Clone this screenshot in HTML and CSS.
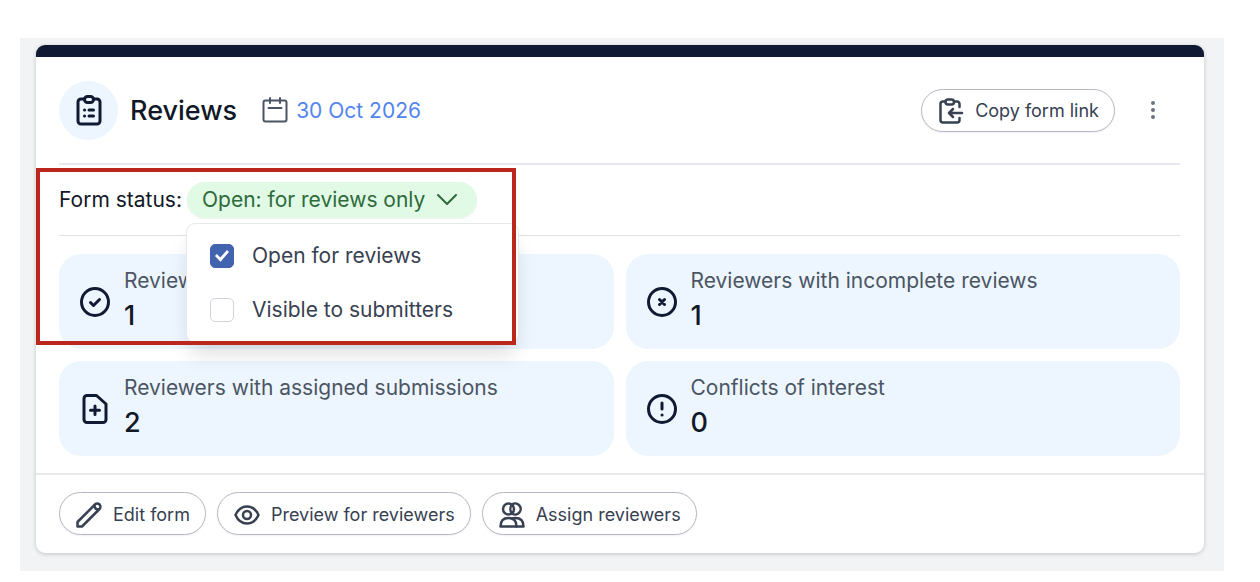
FILE: index.html
```html
<!DOCTYPE html>
<html lang="en">
<head>
    <meta charset="UTF-8">
    <meta name="viewport" content="width=device-width, initial-scale=1.0">
    <title>Reviews</title>
    <link rel="stylesheet" href="styles.css">
</head>
<body>
    <main class="page">
        <section class="card">
            <div class="card-body">
                <header class="card-header">
                    <span class="badge">
                        <svg class="icon-large" viewBox="0 0 32 32">
                            <path d="M11.500 5H8a3 3 0 0 0-3 3v19a3 3 0 0 0 3 3h16a3 3 0 0 0 3-3V8a3 3 0 0 0-3-3h-3.500"/>
                            <rect x="11.500" y="2.500" width="9" height="6" rx="3"/>
                            <path d="M11.500 16h.1M16 16h4.500M11.500 22h.1M16 22h4.500"/>
                        </svg>
                    </span>
                    <h1>Reviews</h1>
                    <svg class="icon calendar" viewBox="0 0 26 26">
                        <rect x="1.500" y="3.500" width="23" height="21" rx="2"/>
                        <path d="M8 1v5M18 1v5M6.500 11h13"/>
                    </svg>
                    <a class="date" href="#">30 Oct 2026</a>
                    <div class="header-actions">
                        <button class="btn" type="button">
                            <svg class="icon" viewBox="0 0 26 26">
                                <path d="M7 3.500H5a2.500 2.500 0 0 0-2.500 2.500v16a2.500 2.500 0 0 0 2.500 2.500h14a2.500 2.500 0 0 0 2.500-2.500v-2M16 3.500h3a2.500 2.500 0 0 1 2.500 2.500v3"/>
                                <rect x="7.500" y="1.500" width="8.500" height="5" rx="2.500"/>
                                <path d="M24 15H11M15 11l-4 4 4 4"/>
                            </svg>
                            Copy form link
                        </button>
                        <button class="more" type="button" aria-label="More actions">
                            <svg viewBox="0 0 6 20">
                                <circle cx="3" cy="3" r="2"/>
                                <circle cx="3" cy="10" r="2"/>
                                <circle cx="3" cy="17" r="2"/>
                            </svg>
                        </button>
                    </div>
                </header>

                <div class="status">
                    <span>Form status:</span>
                    <div class="dropdown">
                        <button class="status-btn" type="button" aria-expanded="true">
                            Open: for reviews only
                            <svg class="chevron" viewBox="0 0 20 12"><path d="m1 1 9 9 9-9"/></svg>
                        </button>
                        <div class="menu">
                            <label><input type="checkbox" checked>Open for reviews</label>
                            <label><input type="checkbox">Visible to submitters</label>
                        </div>
                    </div>
                    <div class="highlight"></div>
                </div>

                <div class="stats">
                    <div class="stat">
                        <svg class="icon-large" viewBox="0 0 32 32">
                            <circle cx="16" cy="16" r="13.500"/>
                            <path d="m11.500 16.500 3 3 6-6"/>
                        </svg>
                        <div>
                            <p>Reviewers</p>
                            <strong>1</strong>
                        </div>
                    </div>
                    <div class="stat">
                        <svg class="icon-large" viewBox="0 0 32 32">
                            <circle cx="16" cy="16" r="13.500"/>
                            <path d="m13.500 13.500 5 5M18.500 13.500l-5 5"/>
                        </svg>
                        <div>
                            <p>Reviewers with incomplete reviews</p>
                            <strong>1</strong>
                        </div>
                    </div>
                    <div class="stat">
                        <svg class="icon-large" viewBox="0 0 32 32">
                            <path d="M8 2.500h9.500L27 11v15.500a3 3 0 0 1-3 3H8a3 3 0 0 1-3-3v-21a3 3 0 0 1 3-3Z"/>
                            <path d="M16 13v8.500M11.500 17.250h9"/>
                        </svg>
                        <div>
                            <p>Reviewers with assigned submissions</p>
                            <strong>2</strong>
                        </div>
                    </div>
                    <div class="stat">
                        <svg class="icon-large" viewBox="0 0 32 32">
                            <circle cx="16" cy="16" r="13.500"/>
                            <path d="M16 10v6M16 22h.1"/>
                        </svg>
                        <div>
                            <p>Conflicts of interest</p>
                            <strong>0</strong>
                        </div>
                    </div>
                </div>
            </div>

            <footer class="card-footer">
                <button class="btn" type="button">
                    <svg class="icon" viewBox="0 0 26 26">
                        <path d="M1.500 24.500v-4.500L19 2.500a3 3 0 0 1 4.500 4.500L6 24.500Z"/>
                        <path d="M18.500 3.500c0 2.500 1.500 4 4 4"/>
                    </svg>
                    Edit form
                </button>
                <button class="btn" type="button">
                    <svg class="icon" viewBox="0 0 26 26">
                        <path d="M1.500 13C4 7.500 8.500 4.500 13 4.500S22 7.500 24.500 13C22 18.500 17.500 21.500 13 21.500S4 18.500 1.500 13Z"/>
                        <circle cx="13" cy="13" r="4"/>
                    </svg>
                    Preview for reviewers
                </button>
                <button class="btn" type="button">
                    <svg class="icon" viewBox="0 0 26 26">
                        <circle cx="9.500" cy="7" r="5.500"/>
                        <path d="M13 2.500a5.500 5.500 0 1 1 0 9a7 7 0 0 1 0-9"/>
                        <path d="M1.500 24.500c0-5 2.500-8.500 8-8.500s8 3.500 8 8.500Z"/>
                        <path d="M13 16.500c1-.4 2-.5 3.500-.5 5.500 0 8 3.500 8 8.500h-7"/>
                    </svg>
                    Assign reviewers
                </button>
            </footer>
        </section>
    </main>
</body>
</html>
```
FILE: styles.css
```css
* {
    box-sizing: border-box;
}

body {
    margin: 0;
    padding: 38px 36px 12px 20px;
    font-family: Inter, sans-serif;
    font-size: 21px;
    line-height: 28px;
    color: #111827;
    background: #fff;
}

button {
    font: inherit;
    cursor: pointer;
}

svg {
    flex: none;
    fill: none;
    stroke: currentColor;
    stroke-width: 2.5;
    stroke-linecap: round;
    stroke-linejoin: round;
}

.page {
    padding: 7px 20px 18px 16px;
    background: #f2f3f5;
}

.card {
    border-top: 12px solid #111a33;
    border-radius: 9px;
    background: #fff;
    box-shadow: 0 1px 4px rgba(0, 0, 0, 0.2);
}

.card-body {
    padding: 0 24px 17px 23px;
}

.card-header {
    display: flex;
    align-items: center;
    height: 108px;
    border-bottom: 2px solid #e8e9ee;
}

.badge {
    display: flex;
    align-items: center;
    justify-content: center;
    width: 59px;
    height: 59px;
    border-radius: 50%;
    color: #111a33;
    background: #edf6fe;
}

.icon {
    width: 26px;
    height: 26px;
}

.icon-large {
    width: 32px;
    height: 32px;
    color: #111a33;
    stroke-width: 3;
}

h1 {
    margin: 0 25px 0 12px;
    padding-top: 2px;
    font-size: 27px;
    font-weight: 500;
    line-height: 36px;
}

.calendar {
    color: #4b5563;
    stroke-width: 2;
    margin-right: 8px;
}

.date {
    padding-top: 2px;
    color: #5285ee;
    text-decoration: none;
}

.header-actions {
    display: flex;
    align-items: center;
    gap: 24px;
    margin-left: auto;
}

.btn {
    display: flex;
    align-items: center;
    gap: 11px;
    height: 43px;
    padding: 2px 15px 0 16px;
    border: 1px solid #b4b8c2;
    border-radius: 22px;
    font-size: 18px;
    color: #374151;
    background: #fff;
    box-shadow: 0 1px 2px rgba(0, 0, 0, 0.06);
}

.more {
    display: flex;
    justify-content: center;
    width: 27px;
    padding: 0;
    border: none;
    color: #6b7280;
    background: none;
    margin-right: 14px;
}

.more svg {
    width: 6px;
    height: 20px;
    fill: currentColor;
    stroke: none;
}

.status {
    position: relative;
    display: flex;
    align-items: center;
    gap: 5px;
    height: 71px;
    border-bottom: 1px solid #dfe0e4;
}

.dropdown {
    position: relative;
}

.status-btn {
    display: flex;
    align-items: center;
    gap: 12px;
    height: 36px;
    padding: 0 20px 0 15px;
    border: none;
    border-radius: 18px;
    color: #2f6a3b;
    background: #e0fae6;
    box-shadow: 0 1px 2px rgba(0, 0, 0, 0.06);
}

.chevron {
    width: 20px;
    height: 12px;
    stroke-width: 2;
}

.menu {
    position: absolute;
    top: 41px;
    left: -1px;
    z-index: 1;
    display: grid;
    gap: 26px;
    width: 333px;
    padding: 18px 23px;
    border: 1px solid #e7e8eb;
    border-radius: 9px;
    background: #fff;
    box-shadow: 0 15px 22px -5px rgba(0, 0, 0, 0.14);
}

.menu label {
    display: flex;
    align-items: center;
    gap: 18px;
    color: #374151;
}

.menu input {
    appearance: none;
    width: 24px;
    height: 24px;
    margin: 0;
    border: 1px solid #d1d5db;
    border-radius: 5px;
    background: #fff;
}

.menu input:checked {
    display: grid;
    place-items: center;
    border-color: #4264ae;
    background: #4264ae;
}

.menu input:checked::before {
    content: "";
    width: 14px;
    height: 12px;
    background: #fff;
    clip-path: polygon(0 50%, 14% 33%, 38% 63%, 86% 0, 100% 16%, 40% 98%);
}

/* red frame round the form status controls */
.highlight {
    position: absolute;
    top: 3px;
    left: -23px;
    z-index: 2;
    width: 480px;
    height: 177px;
    border: 4px solid #bb271d;
    pointer-events: none;
}

.stats {
    display: grid;
    grid-template-columns: 1fr 1fr;
    gap: 12px;
    padding-top: 18px;
}

.stat {
    display: flex;
    align-items: center;
    gap: 13px;
    height: 95px;
    padding: 0 20px;
    border-radius: 22px;
    background: #edf6fe;
}

.stat p {
    margin: 0;
    color: #4b5563;
}

.stat strong {
    display: block;
    font-size: 27px;
    font-weight: 500;
    line-height: 41px;
}

.card-footer {
    display: flex;
    gap: 11px;
    padding: 17px 23px 18px;
    border-top: 2px solid #e8e9eb;
}
```
